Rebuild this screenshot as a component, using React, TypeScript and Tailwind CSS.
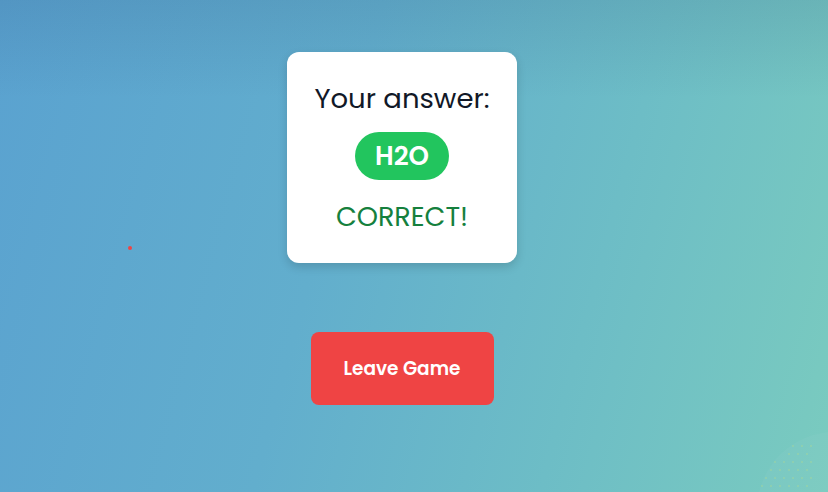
import React from 'react';

const font = { fontFamily: 'Poppins, "DejaVu Sans", "Open Sans", sans-serif' };

function CornerDots() {
  const dots: { x: number; y: number }[] = [];
  for (let r = 0; r < 12; r++) {
    for (let c = 0; c < 12; c++) {
      const x = 8 + c * 9 + (r % 2) * 4;
      const y = 6 + r * 8;
      // keep dots inside the blob (circle centred lower right)
      const dx = x - 130;
      const dy = y - 110;
      if (dx * dx + dy * dy < 75 * 75) dots.push({ x, y });
    }
  }
  return (
    <svg width="128" height="92" viewBox="0 0 128 92" className="pointer-events-none absolute bottom-0 right-0">
      <circle cx="135" cy="110" r="78" fill="rgba(255,255,255,0.035)" />
      {dots.map((d, i) => (
        <circle key={i} cx={d.x} cy={d.y} r="0.7" fill="#d6e36a" opacity="0.55" />
      ))}
    </svg>
  );
}

export default function App() {
  return (
    <div
      className="relative h-[492px] w-full overflow-hidden bg-[linear-gradient(to_bottom,rgba(30,60,100,0.12)_0%,rgba(30,60,100,0)_20%),linear-gradient(105deg,#5aa2d0_0%,#62aecd_40%,#6dbdc6_70%,#7acbbf_100%)]"
      style={font}
    >
      <div className="absolute left-[128px] top-[246px] h-[4px] w-[4px] rounded-full bg-[#ef4444]" />

      <div className="flex flex-col items-center pr-6 pt-[52px]">
        <div className="flex w-[230px] flex-col items-center rounded-xl bg-white pb-[28px] pt-[28px] shadow-[0_4px_10px_rgba(0,0,0,0.15)]">
          <p className="text-[27.5px] leading-[38px] text-[#111827]">Your answer:</p>
          <div className="mt-[14px] flex h-[48px] w-[94px] items-center justify-center rounded-full bg-[#22c55e]">
            <span className="text-[26px] font-semibold text-white">H2O</span>
          </div>
          <p className="mt-[19px] text-[27px] leading-[36px] text-[#15803d]">CORRECT!</p>
        </div>

        <button className="mt-[69px] flex h-[73px] w-[183px] items-center justify-center rounded-lg bg-[#ef4444] text-[18.5px] font-semibold text-white">
          Leave Game
        </button>
      </div>

      <CornerDots />
    </div>
  );
}
